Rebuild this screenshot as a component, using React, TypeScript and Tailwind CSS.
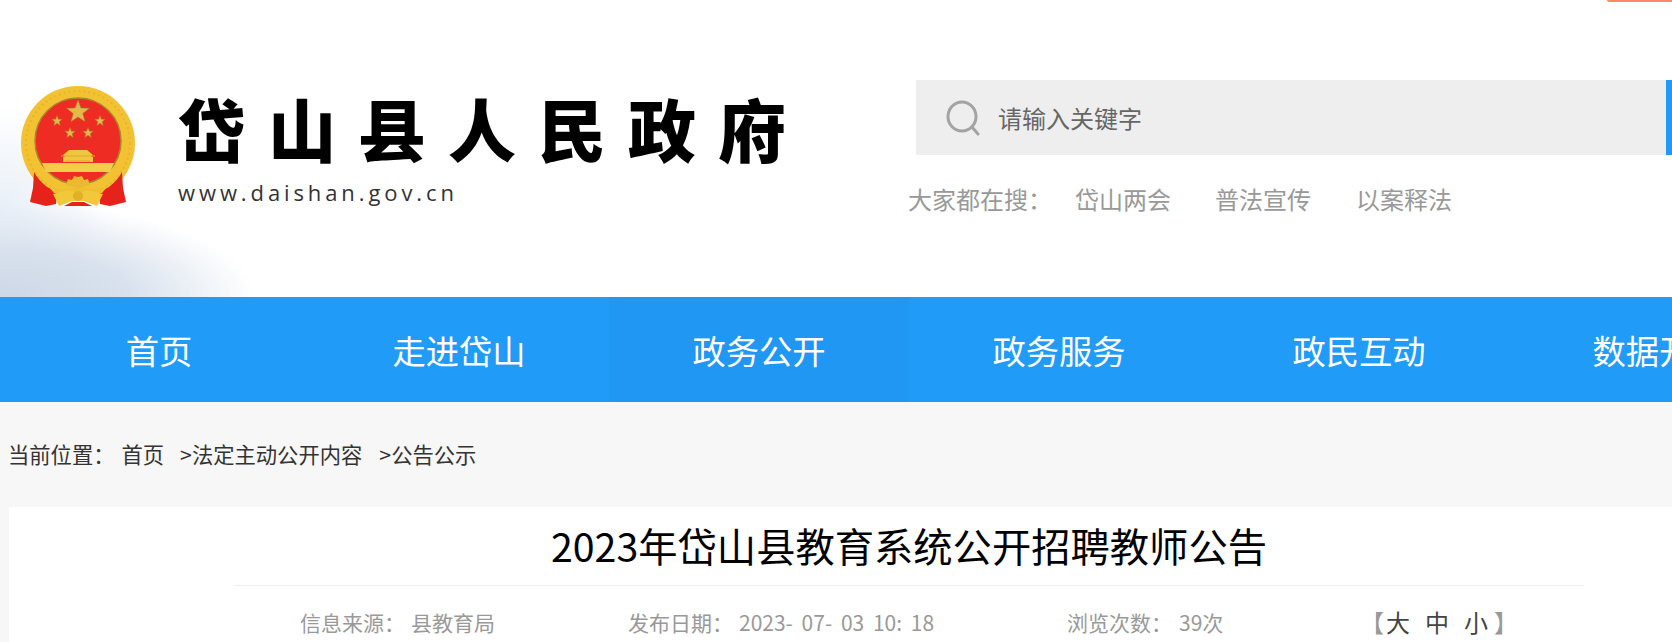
const F = { fontFamily: '"Noto Sans CJK SC","Liberation Sans",sans-serif' };

function Star({ x, y, r }: { x: number; y: number; r: number }) {
  const pts = Array.from({ length: 10 }, (_, i) => {
    const a = -Math.PI / 2 + (i * Math.PI) / 5;
    const d = i % 2 === 0 ? r : r * 0.42;
    return `${x + d * Math.cos(a)},${y + d * Math.sin(a)}`;
  }).join(" ");
  return <polygon points={pts} fill="#e3b94a" stroke="#a07c2c" strokeWidth="0.5" />;
}

function Emblem() {
  return (
    <svg width="116" height="122" viewBox="0 0 116 122" className="shrink-0">
      <circle cx="58" cy="57" r="57" fill="#f2c232" />
      <circle cx="58" cy="57" r="52" fill="none" stroke="#e8b42a" strokeWidth="2" strokeDasharray="2 3" />
      <circle cx="58" cy="55" r="43" fill="#ee2c24" stroke="#a8872e" strokeWidth="1.5" />
      <Star x={58} y={26} r={12} />
      <Star x={37} y={35} r={5.5} />
      <Star x={80} y={35} r={5.5} />
      <Star x={50} y={47} r={5.5} />
      <Star x={68} y={47} r={5.5} />
      <path d="M43 69l6-5h18l6 5-2 2h2v5H43v-5h2z" fill="#f0c640" />
      <path d="M41 70h34M46 75h24" stroke="#e2a92c" strokeWidth="1" />
      <path d="M22 77h72l-4 9H26z" fill="#f3cd48" />
      <path d="M14 86c3 6 8 11 13 15l10 5-1 12-10 2-16-4 3-14z" fill="#e6231a" />
      <path d="M102 86c-3 6-8 11-13 15l-10 5 1 12 10 2 16-4-3-14z" fill="#e6231a" />
      <path d="M28 100c9 4 19 4 30 1 11 3 21 3 30-1l-6 7c-8 1-16 1-24 0-8 1-16 1-24 0z" fill="#eec030" />
      <path d="M46 99l2-6 4 1 2-4 4 1 4-1 2 4 4-1 2 6-12 3z" fill="#e9b92f" />
      <path d="M33 108l16-4 9 3 9-3 16 4-6 12-13-5H52l-13 5z" fill="#f0c83a" />
      <path d="M44 120l8-4h12l8 4z" fill="#e6231a" />
      <circle cx="58" cy="110" r="5" fill="#e3ae28" />
    </svg>
  );
}

function Search() {
  return (
    <svg width="36" height="36" viewBox="0 0 36 36" fill="none" stroke="#a3a3a3" strokeWidth="3" className="shrink-0">
      <ellipse cx="17" cy="16.5" rx="14" ry="14.5" />
      <path d="M27 27l6 7" strokeLinecap="round" />
    </svg>
  );
}

const NAV = ["首页", "走进岱山", "政务公开", "政务服务", "政民互动", "数据开放"];

export default function App() {
  return (
    <div className="relative h-[642px] w-[1672px] overflow-hidden bg-[#f7f7f7]" style={F}>
      <div className="absolute right-0 top-0 h-[2px] w-[65px] rounded-bl-[4px] bg-[#fb8a68]" />

      <header className="flex h-[297px] bg-white bg-[radial-gradient(ellipse_255px_95px_at_0_100%,#cdd8e7_0%,#d8e1ed_50%,rgba(255,255,255,0)_100%),radial-gradient(ellipse_110px_100px_at_0_205px,#e9f0f8_0%,rgba(255,255,255,0)_100%)] pt-[80px]">
        <div className="ml-[20px] flex h-[136px] w-[896px] shrink-0 items-start pt-[6px]">
          <Emblem />
          <div className="ml-[42px] min-w-0 flex-1 pt-[6px]">
            <div className="whitespace-nowrap text-[68px] leading-[72px] font-black tracking-[22px] text-black">岱山县人民政府</div>
            <div className="mt-[14px] text-[22px] leading-[28px] tracking-[3.9px] text-[#333]" style={{ fontFamily: '"Open Sans",sans-serif' }}>www.daishan.gov.cn</div>
          </div>
        </div>
        <div className="min-w-0 flex-1">
          <div className="flex h-[75px] items-center border-r-[6px] border-[#1f9af7] bg-[#eeeeee] pl-[29px]">
            <Search />
            <span className="ml-[17px] text-[24px] text-[#666]">请输入关键字</span>
          </div>
          <div className="mt-[28px] -ml-[8px] flex text-[24px] leading-[32px] text-[#999]">
            <span className="w-[167px]">大家都在搜：</span>
            <span className="w-[140px]">岱山两会</span>
            <span className="w-[141px]">普法宣传</span>
            <span>以案释法</span>
          </div>
        </div>
      </header>

      <nav className="flex h-[105px] overflow-hidden bg-[#209cf8] pl-[9px] text-white">
        {NAV.map((n, i) => (
          <div key={n} className={`flex h-full w-[300px] shrink-0 items-center justify-center whitespace-nowrap text-[33.3px] ${i === 2 ? "bg-[#1f97f3]" : ""}`}>{n}</div>
        ))}
      </nav>

      <div className="flex h-[67px] items-end whitespace-nowrap pl-[8px] text-[21.3px] leading-[30px] text-[#333]">
        <span>当前位置：</span>
        <span className="ml-[7px]">首页</span>
        <span className="ml-[16px]">&gt;法定主动公开内容</span>
        <span className="ml-[17px]">&gt;公告公示</span>
      </div>

      <main className="mt-[38px] ml-[9px] h-[200px] w-[1800px] bg-white">
        <h1 className="pt-[10px] text-center text-[39.3px] leading-[56px] font-normal text-black">2023年岱山县教育系统公开招聘教师公告</h1>
        <div className="mx-auto mt-[12px] flex w-[1350px] items-center border-t border-[#eeeeee] pt-[21px] pl-[66px] text-[21px] leading-[30px] whitespace-nowrap text-[#999]">
          <div className="w-[328px]">信息来源：<span className="ml-[6px]">县教育局</span></div>
          <div className="w-[439px]">发布日期：<span className="ml-[6px] [word-spacing:4px]">2023- 07- 03 10: 18</span></div>
          <div className="w-[293px]">浏览次数：<span className="ml-[7px]">39次</span></div>
          <div className="flex gap-[15px] text-[24px] text-[#444]">
            <span className="-mr-[13px] text-[#999]">【</span>
            <span>大</span>
            <span>中</span>
            <span>小</span>
            <span className="-ml-[9px] text-[#999]">】</span>
          </div>
        </div>
      </main>
    </div>
  );
}
